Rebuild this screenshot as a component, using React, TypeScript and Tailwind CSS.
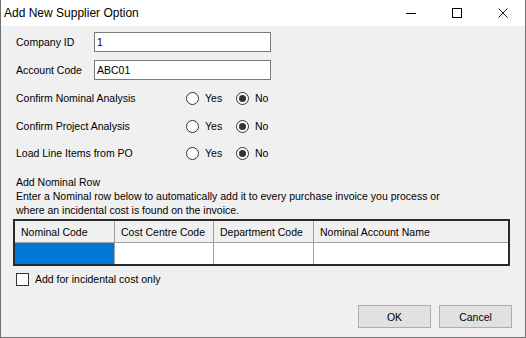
import React from 'react';

function Radio({ checked }: { checked?: boolean }) {
  return (
    <span className="w-[13px] h-[13px] rounded-full border border-[#333333] bg-white flex items-center justify-center shrink-0">
      {checked && <span className="w-[7px] h-[7px] rounded-full bg-[#333333]" />}
    </span>
  );
}

function YesNoRow({ label }: { label: string }) {
  return (
    <div className="flex items-center h-[20px] pl-[3px]">
      <span className="w-[170px]">{label}</span>
      <div className="flex items-center w-[50px] gap-[6px]">
        <Radio />
        <span>Yes</span>
      </div>
      <div className="flex items-center gap-[6px]">
        <Radio checked />
        <span>No</span>
      </div>
    </div>
  );
}

function TextRow({ label, value }: { label: string; value: string }) {
  return (
    <div className="flex items-center h-[20px] pl-[3px]">
      <span className="w-[78px]">{label}</span>
      <div className="w-[177px] h-[20px] border border-[#7a7a7a] bg-white px-[2px] flex items-center">
        {value}
      </div>
    </div>
  );
}

export default function App() {
  const cols = ['Nominal Code', 'Cost Centre Code', 'Department Code', 'Nominal Account Name'];
  const widths = ['w-[100px]', 'w-[99px]', 'w-[100px]', 'flex-1'];

  return (
    <div
      className="w-[526px] h-[338px] bg-[#f0f0f0] border-x border-b border-[#707070] flex flex-col text-[10.5px] leading-[14px] text-black"
      style={{ fontFamily: '"Liberation Sans", Arial, sans-serif' }}
    >
      {/* Title bar */}
      <div className="h-[26px] bg-white flex items-center shrink-0">
        <span className="pl-[3px] text-[12px] flex-1">Add New Supplier Option</span>
        <div className="w-[46px] h-full flex items-center justify-center">
          <span className="w-[10px] h-px bg-black" />
        </div>
        <div className="w-[46px] h-full flex items-center justify-center">
          <span className="w-[10px] h-[10px] border border-black" />
        </div>
        <div className="w-[45px] h-full flex items-center justify-center">
          <svg width="10" height="10" viewBox="0 0 10 10">
            <path d="M0.5 0.5 L9.5 9.5 M9.5 0.5 L0.5 9.5" stroke="black" strokeWidth="0.9" />
          </svg>
        </div>
      </div>

      {/* Body */}
      <div className="flex flex-col pl-[12px] pr-[13px]">
        <div className="mt-[6px]">
          <TextRow label="Company ID" value="1" />
        </div>
        <div className="mt-[8px]">
          <TextRow label="Account Code" value="ABC01" />
        </div>
        <div className="mt-[8px]">
          <YesNoRow label="Confirm Nominal Analysis" />
        </div>
        <div className="mt-[8px]">
          <YesNoRow label="Confirm Project Analysis" />
        </div>
        <div className="mt-[7px]">
          <YesNoRow label="Load Line Items from PO" />
        </div>

        <div className="mt-[12px] pl-[3px]">
          <p>Add Nominal Row</p>
          <p>
            Enter a Nominal row below to automatically add it to every purchase invoice you process or
            <br />
            where an incidental cost is found on the invoice.
          </p>
        </div>

        {/* Grid */}
        <div className="mt-[2px] w-[497px] border-2 border-[#2a2a2a] bg-white flex flex-col">
          <div className="flex h-[22px] bg-[#f0f0f0] border-b border-[#a0a0a0]">
            {cols.map((c, i) => (
              <div
                key={c}
                className={`${widths[i]} ${i < 3 ? 'border-r border-[#a0a0a0]' : ''} flex items-center pl-[6px]`}
              >
                {c}
              </div>
            ))}
          </div>
          <div className="flex h-[21px]">
            {cols.map((c, i) => (
              <div
                key={c}
                className={`${widths[i]} ${i < 3 ? 'border-r border-[#a0a0a0]' : ''} ${i === 0 ? 'bg-[#0078d7]' : 'bg-white'}`}
              />
            ))}
          </div>
        </div>

        <div className="mt-[6px] pl-[3px] flex items-center gap-[6px] h-[14px]">
          <span className="w-[13px] h-[13px] border border-[#333333] bg-white" />
          <span>Add for incidental cost only</span>
        </div>

        <div className="mt-[19px] flex justify-end gap-[8px]">
          <button className="w-[73px] h-[23px] bg-[#e1e1e1] border border-[#adadad]">OK</button>
          <button className="w-[73px] h-[23px] bg-[#e1e1e1] border border-[#adadad]">Cancel</button>
        </div>
      </div>
    </div>
  );
}
